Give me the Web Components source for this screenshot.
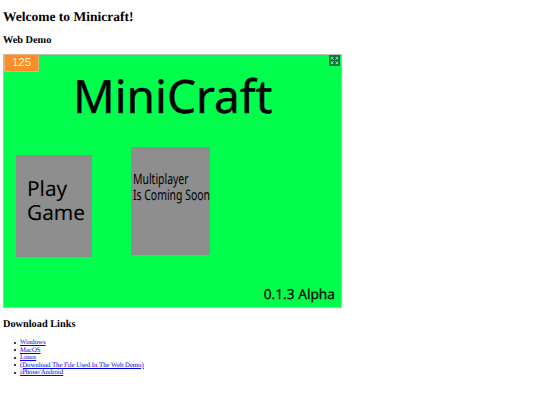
<!DOCTYPE html>
<html>
<head>
<meta charset="utf-8">
<style>
  html, body { margin: 0; background: #fff; }
  body { padding: 0 3px; font-family: "Liberation Serif", serif; color: #000; text-rendering: geometricPrecision; }
</style>
</head>
<body>
<mc-page></mc-page>
<script>
const pageTemplate = document.createElement("template");
pageTemplate.innerHTML = `
  <style>
    :host { display: block; }
    h1 { font-size: 13.5px; line-height: 18px; margin: 0; padding-top: 8px; }
    h2 { font-size: 10.3px; line-height: 13px; margin: 0; }
    .demo { margin-top: 8px; }
    .links { margin-top: 10px; }
    mc-game { margin-top: 7px; }
  </style>
  <h1>Welcome to Minicraft!</h1>
  <h2 class="demo">Web Demo</h2>
  <mc-game></mc-game>
  <h2 class="links">Download Links</h2>
  <mc-links></mc-links>
`;

class McPage extends HTMLElement {
  constructor() {
    super();
    this.attachShadow({ mode: 'open' });
    this.shadowRoot.appendChild(pageTemplate.content.cloneNode(true));
  }
}

const gameTemplate = document.createElement("template");
gameTemplate.innerHTML = `
  <style>
    :host {
      display: block;
      position: relative;
      box-sizing: border-box;
      width: 339px;
      height: 254px;
      background: #00ff4c;
      border: 1px solid #b5bdb5;
      font-family: "Noto Sans", sans-serif;
    }
    .fps {
      position: absolute;
      left: 0;
      top: -1px;
      box-sizing: border-box;
      width: 35px;
      height: 18px;
      background: #ff8c26;
      border: 1px solid #d8b48a;
      border-radius: 1px;
      color: #fff2e0;
      font: 11.5px/16px "Liberation Sans", sans-serif;
      text-align: center;
    }
    .full {
      position: absolute;
      right: 1px;
      top: 0;
      width: 11px;
      height: 11px;
      background: #0a7a3a;
    }
    .full svg { display: block; }
    .title {
      position: absolute;
      left: 69px;
      top: 10px;
      font-size: 46px;
      line-height: 62px;
      white-space: nowrap;
      -webkit-text-stroke: .4px #000;
    }
    .btn {
      position: absolute;
      background: #8e8e8e;
    }
    .play { left: 12px; top: 100px; width: 76px; height: 102px; }
    .play span {
      position: absolute;
      left: 11px;
      top: 22px;
      font-size: 20.8px;
      line-height: 24px;
    }
    .multi { left: 127px; top: 92px; width: 79px; height: 108px; }
    .multi span {
      position: absolute;
      left: 2px;
      top: 24px;
      font-size: 14.5px;
      line-height: 16px;
      white-space: nowrap;
      transform: scaleX(.72);
      transform-origin: 0 0;
    }
    .version {
      position: absolute;
      right: 6px;
      bottom: 2px;
      font-size: 13.7px;
      line-height: 20px;
      -webkit-text-stroke: .25px #000;
    }
  </style>
  <div class="title">MiniCraft</div>
  <div class="btn play"><span>Play<br>Game</span></div>
  <div class="btn multi"><span>Multiplayer<br>Is Coming Soon</span></div>
  <div class="version">0.1.3 Alpha</div>
  <div class="fps">125</div>
  <div class="full">
    <svg width="11" height="11" viewBox="0 0 11 11" fill="none" stroke="#d8f5e0" stroke-width=".8" stroke-opacity=".85">
      <path d="M2.800 2.800L4.600 4.600M8.200 2.800L6.400 4.600M2.800 8.200L4.600 6.400M8.200 8.200L6.400 6.400"/>
      <path d="M2.500 4.300V2.500H4.300M6.700 2.500H8.500V4.300M2.500 6.700V8.500H4.300M6.700 8.500H8.500V6.700"/>
    </svg>
  </div>
`;

class McGame extends HTMLElement {
  constructor() {
    super();
    this.attachShadow({ mode: 'open' });
    this.shadowRoot.appendChild(gameTemplate.content.cloneNode(true));
  }
}

const linksTemplate = document.createElement("template");
linksTemplate.innerHTML = `
  <style>
    :host { display: block; margin-top: 8px; font-size: 6.75px; line-height: 7.500px; }
    ul { margin: 0; padding: 0; list-style: none; }
    li { display: flex; align-items: center; }
    li::before {
      content: "";
      width: 2px;
      height: 2px;
      margin: 0 4.500px 0 10.500px;
      border-radius: 50%;
      background: #000;
    }
    a { color: #0000ee; text-decoration: underline; }
  </style>
  <ul>
    <li><a href="#">Windows</a></li>
    <li><a href="#">MacOS</a></li>
    <li><a href="#">Linux</a></li>
    <li><a href="#">(Download The File Used In The Web Demo)</a></li>
    <li><a href="#">iPhone/Android</a></li>
  </ul>
`;

class McLinks extends HTMLElement {
  constructor() {
    super();
    this.attachShadow({ mode: 'open' });
    this.shadowRoot.appendChild(linksTemplate.content.cloneNode(true));
  }
}

customElements.define('mc-game', McGame);
customElements.define('mc-links', McLinks);
customElements.define('mc-page', McPage);
</script>
</body>
</html>
